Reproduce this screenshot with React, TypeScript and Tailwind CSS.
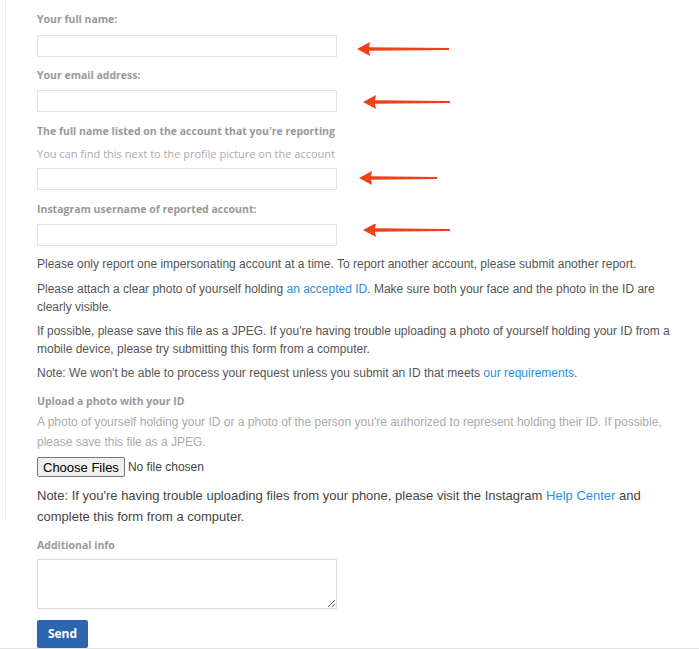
import React from 'react';

const label = "font-['Open_Sans',sans-serif] text-[10.5px] font-bold leading-4 text-[#999]";
const body = "font-['Liberation_Sans',Arial,sans-serif] text-[12px] leading-[18px] text-[#555]";
const link = 'text-[#2b8fe0]';

const Arrow = ({ gap, len, y }: { gap: number; len: number; y: number }) => (
  <svg width={len} height={22} style={{ marginLeft: gap }} className="shrink-0">
    <path
      d={`M0 ${y} L13 ${y - 7} L12 ${y - 1.8} L${len} ${y - 1} L${len} ${y + 1} L12 ${y + 1.8} L13 ${y + 7} Z`}
      fill="#f0401b"
    />
  </svg>
);

const Field = ({ arrow }: { arrow: { gap: number; len: number; y: number } }) => (
  <div className="flex items-center">
    <div className="w-[300px] h-[22px] border border-[#e3e3e3] bg-white shrink-0" />
    <Arrow {...arrow} />
  </div>
);

const App = () => {
  return (
    <div className="w-[699px] h-[649px] bg-white border-b border-[#e2e2e2] overflow-hidden">
      <div className="ml-[5px] border-l border-dotted border-[#dcdcdc] pl-[31px] pt-[11px] pb-[2px]">
        <div className="w-[640px]">
          <p className={label}>Your full name:</p>
          <div className="mt-[8px]">
            <Field arrow={{ gap: 20, len: 92, y: 14 }} />
          </div>
          <p className={`${label} mt-[10px]`}>Your email address:</p>
          <div className="mt-[7px]">
            <Field arrow={{ gap: 26, len: 87, y: 12 }} />
          </div>
          <p className={`${label} mt-[11px]`}>The full name listed on the account that you're reporting</p>
          <p className="font-['Open_Sans',sans-serif] text-[11px] leading-4 text-[#aaa] mt-[7px]">
            You can find this next to the profile picture on the account
          </p>
          <div className="mt-[6px]">
            <Field arrow={{ gap: 22, len: 78, y: 10 }} />
          </div>
          <p className={`${label} mt-[11px]`}>Instagram username of reported account:</p>
          <div className="mt-[7px]">
            <Field arrow={{ gap: 26, len: 87, y: 6 }} />
          </div>

          <p className={`${body} mt-[9px]`}>
            Please only report one impersonating account at a time. To report another account, please submit another report.
          </p>
          <p className={`${body} mt-[7px]`}>
            Please attach a clear photo of yourself holding <span className={link}>an accepted ID</span>. Make sure both your face and the photo in the ID are clearly visible.
          </p>
          <p className={`${body} mt-[6px]`}>
            If possible, please save this file as a JPEG. If you're having trouble uploading a photo of yourself holding your ID from a mobile device, please try submitting this form from a computer.
          </p>
          <p className={`${body} mt-[6px]`}>
            Note: We won't be able to process your request unless you submit an ID that meets <span className={link}>our requirements</span>.
          </p>

          <p className={`${label} mt-[11px]`}>Upload a photo with your ID</p>
          <p className="font-['Liberation_Sans',Arial,sans-serif] text-[12px] leading-[20px] text-[#aaa] mt-[3px]">
            A photo of yourself holding your ID or a photo of the person you're authorized to represent holding their ID. If possible, please save this file as a JPEG.
          </p>
          <div className="flex items-center gap-[3px] mt-[5px]">
            <button className="h-[20px] px-[5px] bg-[#efefef] border border-[#767676] rounded-[2px] font-['Liberation_Sans',Arial,sans-serif] text-[13px] text-black leading-none">
              Choose Files
            </button>
            <span className="font-['Liberation_Sans',Arial,sans-serif] text-[12px] text-[#444]">No file chosen</span>
          </div>
          <p className="font-['Liberation_Sans',Arial,sans-serif] text-[13px] leading-[21px] text-[#444] mt-[8px] mb-[-10px] pr-[30px]">
            Note: If you're having trouble uploading files from your phone, please visit the Instagram <span className={link}>Help Center</span> and complete this form from a computer.
          </p>
        </div>
      </div>

      <div className="pl-[37px]">
        <p className={`${label} mt-[18px]`}>Additional info</p>
        <textarea className="block mt-[6px] w-[300px] h-[50px] border border-[#dedede] bg-white" />
        <button className="mt-[11px] w-[51px] h-[28px] rounded-[2px] bg-[#2d66b0] text-white font-['Open_Sans',sans-serif] font-bold text-[12px]">
          Send
        </button>
      </div>
    </div>
  );
};

export default App;
